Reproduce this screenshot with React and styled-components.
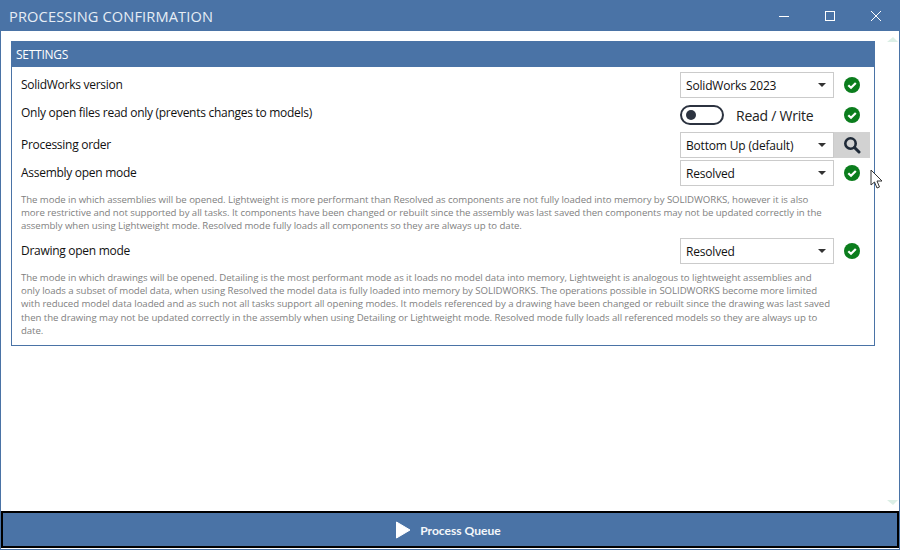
import React from "react";
import styled, { createGlobalStyle } from "styled-components";

const Global = createGlobalStyle`
  html, body { margin: 0; padding: 0; background: #fff; }
  * { box-sizing: border-box; }
`;
const blue = "#4a73a6";
const Win = styled.div`
  position: relative; width: 900px; height: 550px; display: flex; flex-direction: column;
  border: 1px solid ${blue}; border-top: 0; background: #fff; overflow: hidden;
  font-family: "Open Sans", "Noto Sans", sans-serif; color: #111;
`;
const TitleBar = styled.div`
  height: 31px; flex: none; background: ${blue}; display: flex; align-items: center; justify-content: space-between;
  padding-left: 8px; color: #e6edf5;
`;
const Title = styled.div`font-size: 14.6px; letter-spacing: 0.14px; font-weight: 400;`;
const WinButtons = styled.div`display: flex; height: 100%;`;
const WinButton = styled.div`width: 46px; display: flex; align-items: center; justify-content: center; color: #fff;`;
const Scroll = styled.div`flex: 1; min-height: 0; position: relative; padding: 10px 0 0 10px;`;
const Panel = styled.section`
  width: 864px; height: 305px; border: 1px solid ${blue}; display: flex; flex-direction: column;
`;
const PanelHead = styled.div`
  height: 25px; flex: none; background: ${blue}; color: #fff; font-size: 12px; font-weight: 500; letter-spacing: -0.25px;
  padding-left: 4px; display: flex; align-items: center;
`;
const Body = styled.div`padding: 5px 0 0 9px; display: flex; flex-direction: column;`;
const Row = styled.div`
  display: grid; grid-template-columns: 659px 154px 36px; height: ${p => p.$h}px; margin-top: ${p => p.$mt || 0}px; align-items: center;
`;
const Label = styled.div`font-size: 12px; letter-spacing: -0.28px; margin-top: ${p => p.$up ? -6 : -2}px; white-space: nowrap;`;
const Select = styled.div`
  height: ${p => p.$h || 26}px; width: 154px; border: 1px solid #cbcbcb; background: #fff; padding: 0 5px; display: flex; align-items: center; justify-content: space-between;
  font-size: 12px; letter-spacing: -0.18px; padding-right: 6px;
`;
const Caret = styled.span`width: 0; height: 0; border-left: 4px solid transparent; border-right: 4px solid transparent; border-top: 4px solid #333; margin-right: 1px;`;
const Side = styled.div`display: flex; align-items: center; justify-content: center; height: 100%;`;
const SearchBtn = styled.div`height: 26px; width: 36px; background: #d2d2d2; display: flex; align-items: center; justify-content: center;`;
const ToggleCell = styled.div`display: flex; align-items: center; gap: 12px; font-size: 14px; letter-spacing: -0.25px; color: #222; white-space: nowrap;`;
const Toggle = styled.div`width: 44px; height: 20px; border: 2.5px solid #2c3340; border-radius: 10px; display: flex; align-items: center; padding-left: 4px;`;
const Knob = styled.div`width: 10px; height: 10px; border-radius: 50%; background: #2c3340;`;
const Desc = styled.p`
  margin: ${p => p.$mt}px 0 0 0; width: 811px; font-size: 9.65px; line-height: 13.2px; color: #7f7f7f; letter-spacing: -0.06px;
`;
const Arrow = styled.div`
  position: absolute; right: 1px; width: 0; height: 0; border-left: 6px solid transparent; border-right: 5px solid transparent;
  ${p => p.$down ? `bottom: 6px; border-top: 5px solid #dcefe6;` : `top: 6px; border-bottom: 5px solid #dcefe6;`}
`;
const Cursor = styled.svg`position: absolute; left: 869px; top: 169px;`;
const Run = styled.button`
  flex: none; height: 37px; width: 100%; margin: 0 0 1px; padding: 1px 4px 0 0; background: ${blue}; border: 2px solid #000; color: #f4f7fa;
  font-family: Lato, sans-serif; font-weight: 700; font-size: 12.1px; display: flex; align-items: center; justify-content: center; gap: 9px;
`;

const Check = () => (
  <svg width="16" height="16" viewBox="0 0 16 16"><circle cx="8" cy="8" r="8" fill="#0b7d1d" /><path d="M4.3 8.2 7 10.8 11.8 5.9" fill="none" stroke="#fff" strokeWidth="2.2" /></svg>
);

export default function App() {
  return (
    <Win>
      <Global />
      <TitleBar>
        <Title>PROCESSING CONFIRMATION</Title>
        <WinButtons>
          <WinButton><svg width="10" height="10"><path d="M0 5.5H10" stroke="#fff" /></svg></WinButton>
          <WinButton><svg width="10" height="10"><rect x=".5" y=".5" width="9" height="9" fill="none" stroke="#fff" /></svg></WinButton>
          <WinButton><svg width="10" height="10"><path d="M0 0 10 10M10 0 0 10" stroke="#fff" /></svg></WinButton>
        </WinButtons>
      </TitleBar>
      <Scroll>
        <Panel>
          <PanelHead>SETTINGS</PanelHead>
          <Body>
            <Row $h={26}>
              <Label>SolidWorks version</Label>
              <Select>SolidWorks 2023<Caret /></Select>
              <Side><Check /></Side>
            </Row>
            <Row $h={20} $mt={7}>
              <Label $up>Only open files read only (prevents changes to models)</Label>
              <ToggleCell><Toggle><Knob /></Toggle>Read / Write</ToggleCell>
              <Side><Check /></Side>
            </Row>
            <Row $h={26} $mt={7}>
              <Label>Processing order</Label>
              <Select>Bottom Up (default)<Caret /></Select>
              <SearchBtn>
                <svg width="18" height="18" viewBox="0 0 18 18"><circle cx="7.5" cy="7.5" r="5.2" fill="none" stroke="#1f2a38" strokeWidth="2.6" /><path d="M11.5 11.5 16 16" stroke="#1f2a38" strokeWidth="3" strokeLinecap="round" /></svg>
              </SearchBtn>
            </Row>
            <Row $h={26} $mt={2}>
              <Label>Assembly open mode</Label>
              <Select>Resolved<Caret /></Select>
              <Side><Check /></Side>
            </Row>
            <Desc $mt={7}>The mode in which assemblies will be opened. Lightweight is more performant than Resolved as components are not fully loaded into memory by SOLIDWORKS, however it is also more restrictive and not supported by all tasks. It components have been changed or rebuilt since the assembly was last saved then components may not be updated correctly in the assembly when using Lightweight mode. Resolved mode fully loads all components so they are always up to date.</Desc>
            <Row $h={26} $mt={5.4}>
              <Label>Drawing open mode</Label>
              <Select>Resolved<Caret /></Select>
              <Side><Check /></Side>
            </Row>
            <Desc $mt={7}>The mode in which drawings will be opened. Detailing is the most performant mode as it loads no model data into memory, Lightweight is analogous to lightweight assemblies and only loads a subset of model data, when using Resolved the model data is fully loaded into memory by SOLIDWORKS. The operations possible in SOLIDWORKS become more limited with reduced model data loaded and as such not all tasks support all opening modes. It models referenced by a drawing have been changed or rebuilt since the drawing was last saved then the drawing may not be updated correctly in the assembly when using Detailing or Lightweight mode. Resolved mode fully loads all referenced models so they are always up to date.</Desc>
          </Body>
        </Panel>
        <Arrow />
        <Arrow $down />
      </Scroll>
      <Run>
        <svg width="16" height="18" viewBox="0 0 16 18"><path d="M1.5 1 15 9 1.5 17Z" fill="#fff" stroke="#fff" strokeLinejoin="round" /></svg>
        Process Queue
      </Run>
      <Cursor width="14" height="22" viewBox="0 0 14 22"><path d="M1 1V16L4.5 13 7 19 9.5 18 7 12H12Z" fill="#fff" stroke="#333" strokeWidth="1" /></Cursor>
    </Win>
  );
}
